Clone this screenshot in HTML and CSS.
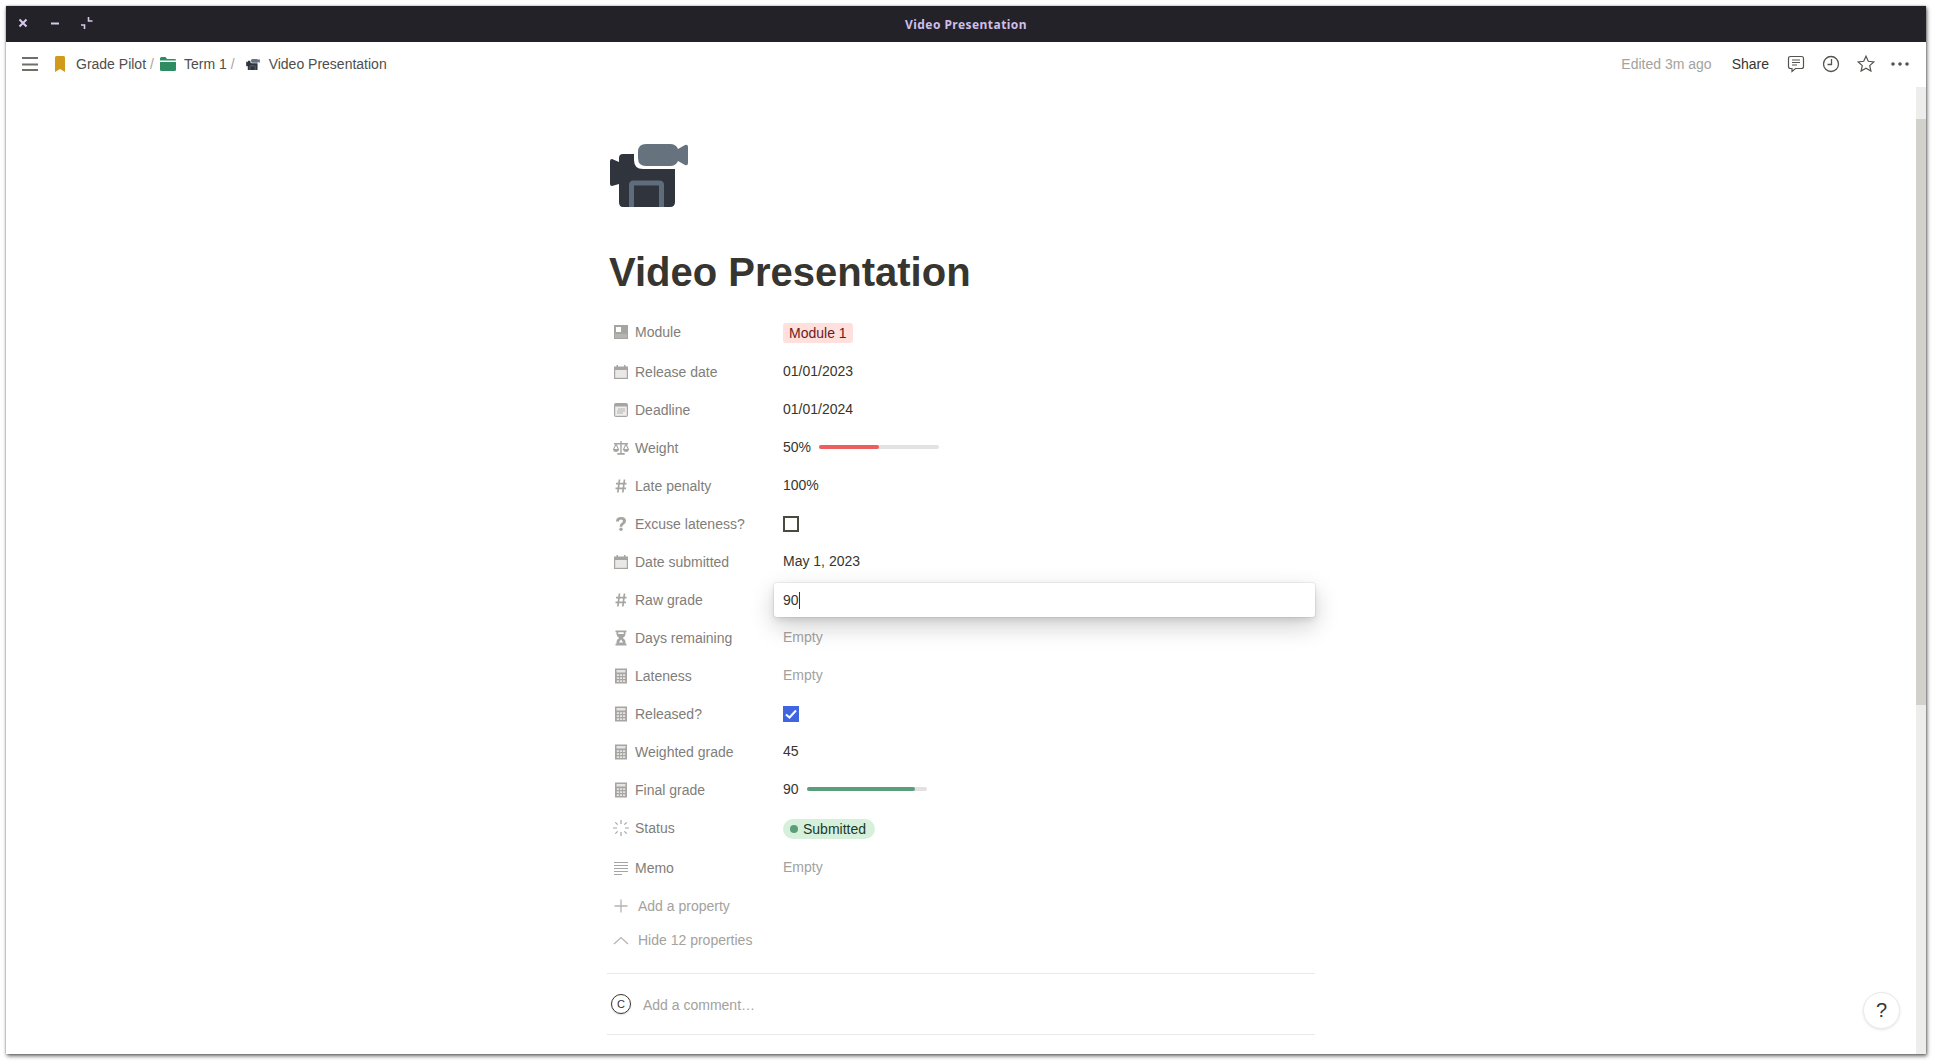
FILE: index.html
```html
<!DOCTYPE html>
<html lang="en">
<head>
    <meta charset="UTF-8">
    <title>Video Presentation</title>
    <link rel="stylesheet" href="styles.css">
</head>
<body>

<div class="window">
    <div class="titlebar">
        <div class="win-buttons">
            <svg class="win-btn" viewBox="0 0 12 12"><path d="M2.500 2.500l7 7M9.500 2.500l-7 7" stroke="#d6c8ee" stroke-width="2"/></svg>
            <svg class="win-btn" viewBox="0 0 12 12"><path d="M2 6.500h8" stroke="#d6c8ee" stroke-width="2"/></svg>
            <svg class="win-btn" viewBox="0 0 12 12"><path d="M7.500 0v4h4M0 8h3.500v4" fill="none" stroke="#d6c8ee" stroke-width="1.600"/></svg>
        </div>
        <div class="win-title">Video Presentation</div>
    </div>

    <div class="topbar">
        <svg class="menu-icon" viewBox="0 0 16 14"><path d="M0 1h16M0 7.500h16M0 13h16" stroke="#6f6e69" stroke-width="1.800"/></svg>
        <div class="crumbs">
            <svg class="crumb-icon" viewBox="0 0 10 16"><path d="M0 1.500q0-1.500 1.500-1.500h7q1.500 0 1.500 1.500v14.500l-5-3-5 3z" fill="#d19a1a"/></svg>
            <span class="crumb">Grade Pilot</span><span class="sep">/</span>
            <svg class="crumb-icon folder" viewBox="0 0 16 14"><path d="M0 1.500q0-1.500 1.500-1.500h4l1.500 2h7.500q1.500 0 1.500 1v.5h-16z" fill="#2e8b62"/><path d="M0 5h16v7.500q0 1.500-1.500 1.500h-13q-1.500 0-1.500-1.500z" fill="#2e8b62"/></svg>
            <span class="crumb">Term 1</span><span class="sep">/</span>
            <svg class="crumb-icon cam" viewBox="0 0 78 63"><use href="#camera"/></svg>
            <span class="crumb">Video Presentation</span>
        </div>
        <div class="top-actions">
            <span class="edited">Edited 3m ago</span>
            <span class="share">Share</span>
            <svg class="action-icon" viewBox="0 0 18 18"><path d="M3.500 1.500h11q2 0 2 2v8q0 2-2 2h-6l-3.500 3v-3h-1.500q-2 0-2-2v-8q0-2 2-2z" fill="none" stroke="#55534e" stroke-width="1.200"/><path d="M5 5h8M5 7.500h8M5 10h5" stroke="#55534e" stroke-width="1.200"/></svg>
            <svg class="action-icon" viewBox="0 0 18 18"><circle cx="9" cy="9" r="7.500" fill="none" stroke="#55534e" stroke-width="1.300"/><path d="M9.500 4v5.500h-4" fill="none" stroke="#55534e" stroke-width="1.300"/></svg>
            <svg class="action-icon" viewBox="0 0 18 18"><path d="M9 1.200l2.300 5.100 5.500.6-4.100 3.700 1.200 5.500-4.900-2.900-4.900 2.900 1.200-5.500-4.100-3.700 5.500-.6z" fill="none" stroke="#55534e" stroke-width="1.200"/></svg>
            <svg class="more-icon" viewBox="0 0 18 4"><circle cx="2" cy="2" r="1.800" fill="#55534e"/><circle cx="9" cy="2" r="1.800" fill="#55534e"/><circle cx="16" cy="2" r="1.800" fill="#55534e"/></svg>
        </div>
    </div>

    <div class="main">
        <div class="page">
            <svg class="page-icon" viewBox="0 0 78 63">
                <g id="camera">
                    <path d="M13 10h11v6q0 9 9 9h32v33q0 5-5 5h-47q-4 0-4-5v-18l-7 2q-2 0-2-2v-23q0-2 2-2l7 3v-4q0-4 4-4z" fill="#2f343d"/>
                    <path d="M21.500 63v-22q0-2 2-2h26q2 0 2 2v22" fill="none" stroke="#5f6c7a" stroke-width="5"/>
                    <path d="M36 0h24q6 0 8 5l7-4q3-1 3 2v16q0 3-3 2l-7-4q-2 5-8 5h-24q-8 0-8-8v-6q0-8 8-8z" fill="#66737f"/>
                </g>
            </svg>
            <h1 class="page-title">Video Presentation</h1>

            <div class="props">
                <div class="prop tall">
                    <div class="prop-label">
                        <svg class="prop-icon" viewBox="-1 -1 16 16"><path d="M0 0h14v14h-14z" fill="#a6a5a1"/><path d="M2 2h5v5h-5z" fill="#fff"/><path d="M1 9h12v4h-12z" fill="#b5b4b0"/></svg>
                        <span>Module</span>
                    </div>
                    <div class="prop-value"><span class="tag-red">Module 1</span></div>
                </div>
                <div class="prop">
                    <div class="prop-label">
                        <svg class="prop-icon" viewBox="-1 -1 16 16"><use href="#i-cal"/></svg>
                        <span>Release date</span>
                    </div>
                    <div class="prop-value">01/01/2023</div>
                </div>
                <div class="prop">
                    <div class="prop-label">
                        <svg class="prop-icon" viewBox="-1 -1 16 16"><path d="M2 0h10q2 0 2 2v10q0 2-2 2h-10q-2 0-2-2v-10q0-2 2-2z" fill="#a6a5a1"/><path d="M1.200 3.500h11.600v9.300h-11.600z" fill="#fff" fill-opacity=".8"/><path d="M4 5.500h7v1h-7zM3 7.500h8v1h-8zM3 9.500h6v1h-6z" fill="#b5b4b0"/></svg>
                        <span>Deadline</span>
                    </div>
                    <div class="prop-value">01/01/2024</div>
                </div>
                <div class="prop">
                    <div class="prop-label">
                        <svg class="prop-icon" viewBox="0 0 16 14"><path d="M7.300 0h1.400v12h3v1.800h-7.400v-1.800h3zM1 2h14v1.400h-14z" fill="#a6a5a1"/><path d="M3 3l-2.500 5.500h5zM13 3l-2.500 5.500h5z" fill="none" stroke="#a6a5a1" stroke-width="1.100"/><path d="M0 8.500h6q-.5 2.600-3 2.600t-3-2.600zM10 8.500h6q-.5 2.600-3 2.600t-3-2.600z" fill="#a6a5a1"/></svg>
                        <span>Weight</span>
                    </div>
                    <div class="prop-value">
                        50%
                        <div class="bar"><div class="bar-fill red" style="width: 50%"></div></div>
                    </div>
                </div>
                <div class="prop">
                    <div class="prop-label">
                        <svg class="prop-icon" viewBox="-1 -1 16 16"><use href="#i-hash"/></svg>
                        <span>Late penalty</span>
                    </div>
                    <div class="prop-value">100%</div>
                </div>
                <div class="prop">
                    <div class="prop-label">
                        <svg class="prop-icon" viewBox="-1 -1 16 16"><path d="M2 4.500q0-4.500 5-4.500 5 0 5 4 0 2.300-2.300 3.500-1.300.7-1.300 2.200h-2.800q0-2.700 1.900-3.800 1.500-.8 1.500-1.800 0-1.500-2-1.500-2.100 0-2.100 1.900z" fill="#a6a5a1"/><circle cx="7" cy="12.300" r="1.700" fill="#a6a5a1"/></svg>
                        <span>Excuse lateness?</span>
                    </div>
                    <div class="prop-value"><span class="checkbox"></span></div>
                </div>
                <div class="prop">
                    <div class="prop-label">
                        <svg class="prop-icon" viewBox="-1 -1 16 16">
                            <g id="i-cal"><path d="M2.500 0h1.500v1.500h6v-1.500h1.500v1.500h2.500v12.500h-14v-12.500h2.500z" fill="#a6a5a1"/><path d="M1.200 5h11.600v7.800h-11.600z" fill="#fff" fill-opacity=".75"/></g>
                        </svg>
                        <span>Date submitted</span>
                    </div>
                    <div class="prop-value">May 1, 2023</div>
                </div>
                <div class="prop">
                    <div class="prop-label">
                        <svg class="prop-icon" viewBox="-1 -1 16 16">
                            <g id="i-hash"><path d="M5.500 .5l-1.700 13M10.500 .5l-1.700 13M2 4.700h10.500M1.500 9.300h10.500" fill="none" stroke="#a6a5a1" stroke-width="1.700"/></g>
                        </svg>
                        <span>Raw grade</span>
                    </div>
                    <div class="prop-editor">90<span class="caret"></span></div>
                </div>
                <div class="prop">
                    <div class="prop-label">
                        <svg class="prop-icon" viewBox="-1 -1 16 16"><path d="M1.500 -.5h11v1.800h-1v2q0 2-2.700 3.700 2.700 1.700 2.700 3.700v2h1v1.800h-11v-1.800h1v-2q0-2 2.700-3.700-2.700-1.700-2.700-3.700v-2h-1z" fill="#a6a5a1"/><path d="M4.300 1.300h5.400v1.800h-5.400zM7 8.500l2.200 3h-4.400z" fill="#fff"/></svg>
                        <span>Days remaining</span>
                    </div>
                    <div class="prop-value empty">Empty</div>
                </div>
                <div class="prop">
                    <div class="prop-label">
                        <svg class="prop-icon" viewBox="-1 -1 16 16">
                            <g id="i-calc"><path d="M1 -.5h12v15h-12z" fill="#a6a5a1"/><path d="M2.500 1h9v2.500h-9zM2.800 5.200h2.200v1.800h-2.200zM5.900 5.200h2.200v1.800h-2.200zM9 5.200h2.200v1.800h-2.200zM2.800 8.200h2.200v1.800h-2.200zM5.900 8.200h2.200v1.800h-2.200zM9 8.200h2.200v1.800h-2.200zM2.800 11.200h2.200v1.800h-2.200zM5.900 11.200h2.200v1.800h-2.200zM9 11.200h2.200v1.800h-2.200z" fill="#fff" fill-opacity=".7"/></g>
                        </svg>
                        <span>Lateness</span>
                    </div>
                    <div class="prop-value empty">Empty</div>
                </div>
                <div class="prop">
                    <div class="prop-label">
                        <svg class="prop-icon" viewBox="-1 -1 16 16"><use href="#i-calc"/></svg>
                        <span>Released?</span>
                    </div>
                    <div class="prop-value">
                        <span class="checkbox checked"><svg viewBox="0 0 16 16"><path d="M3 8.500l3.500 3 6.500-7" fill="none" stroke="#fff" stroke-width="2"/></svg></span>
                    </div>
                </div>
                <div class="prop">
                    <div class="prop-label">
                        <svg class="prop-icon" viewBox="-1 -1 16 16"><use href="#i-calc"/></svg>
                        <span>Weighted grade</span>
                    </div>
                    <div class="prop-value">45</div>
                </div>
                <div class="prop">
                    <div class="prop-label">
                        <svg class="prop-icon" viewBox="-1 -1 16 16"><use href="#i-calc"/></svg>
                        <span>Final grade</span>
                    </div>
                    <div class="prop-value">
                        90
                        <div class="bar"><div class="bar-fill green" style="width: 90%"></div></div>
                    </div>
                </div>
                <div class="prop tall">
                    <div class="prop-label">
                        <svg class="prop-icon" viewBox="0 0 16 16"><path d="M8 0v4M8 12v4M0 8h4M12 8h4M2.300 2.300l2.300 2.300M11.400 11.400l2.300 2.300M13.700 2.300l-2.300 2.300M4.600 11.400l-2.300 2.300" stroke="#a6a5a1" stroke-width="1.200"/></svg>
                        <span>Status</span>
                    </div>
                    <div class="prop-value"><span class="tag-green"><span class="dot"></span>Submitted</span></div>
                </div>
                <div class="prop">
                    <div class="prop-label">
                        <svg class="prop-icon" viewBox="-1 -1 16 16"><path d="M0 1.500h14M0 4.500h14M0 7.500h14M0 10.500h14M0 13.500h8" stroke="#a6a5a1" stroke-width="1"/></svg>
                        <span>Memo</span>
                    </div>
                    <div class="prop-value empty">Empty</div>
                </div>
            </div>

            <div class="prop-link">
                <svg class="prop-icon" viewBox="-1 -1 16 16"><path d="M7 .5v13M.5 7h13" stroke="#b5b4b0" stroke-width="1.300"/></svg>
                <span>Add a property</span>
            </div>
            <div class="prop-link hide">
                <svg class="prop-icon" viewBox="-1 -1 16 16"><path d="M0 11l7-6.500 7 6.500" fill="none" stroke="#b5b4b0" stroke-width="1.200"/></svg>
                <span>Hide 12 properties</span>
            </div>

            <div class="comment-row">
                <span class="avatar">C</span>
                <span class="comment-text">Add a comment…</span>
            </div>
        </div>
        <div class="scrollbar"><div class="scroll-thumb"></div></div>
        <button class="help-btn">?</button>
    </div>
</div>

</body>
</html>
```

FILE: styles.css
```css
* {
    box-sizing: border-box;
}
body {
    margin: 0;
    padding: 6px 10px 10px 6px;
    height: 1064px;
    overflow: hidden;
    background-color: #fff;
    font-family: "Liberation Sans", Arial, sans-serif;
    font-size: 14px;
    color: #37352f;
}
.window {
    height: 100%;
    display: flex;
    flex-direction: column;
    background-color: #fff;
    box-shadow: 1px 2px 4px rgba(0, 0, 0, 0.6), 0 0 2px rgba(0, 0, 0, 0.3);
}
.titlebar {
    height: 36px;
    flex: none;
    background-color: #242229;
    position: relative;
    display: flex;
    align-items: center;
    justify-content: center;
}
.win-buttons {
    position: absolute;
    left: 11px;
    top: 11px;
    display: flex;
    gap: 20px;
}
.win-btn {
    width: 12px;
    height: 12px;
}
.win-title {
    font-family: "Noto Sans", sans-serif;
    font-size: 12px;
    font-weight: 700;
    color: #cdbfe6;
    letter-spacing: 0.45px;
}
.topbar {
    height: 45px;
    flex: none;
    display: flex;
    align-items: center;
    padding: 0 17px 2px 16px;
}
.menu-icon {
    width: 16px;
    height: 14px;
    margin-right: 17px;
}
.crumbs {
    display: flex;
    align-items: center;
    margin-top: 1px;
}
.crumb-icon {
    width: 10px;
    height: 16px;
    margin-right: 11px;
}
.crumb-icon.folder {
    width: 16px;
    height: 14px;
    margin-left: 6px;
    margin-right: 8px;
}
.crumb-icon.cam {
    width: 14px;
    height: 11px;
    margin-left: 11px;
    margin-right: 9px;
}
.crumb {
    color: #4f4e4a;
}
.sep {
    color: #a6a5a1;
    margin-left: 4px;
}
.top-actions {
    margin-left: auto;
    display: flex;
    align-items: center;
}
.edited {
    color: #a3a29e;
}
.share {
    margin-left: 20px;
    color: #37352f;
}
.action-icon {
    width: 18px;
    height: 18px;
    margin-left: 17px;
}
.share + .action-icon {
    margin-left: 18px;
}
.more-icon {
    width: 18px;
    height: 4px;
    margin-left: 16px;
}
.main {
    flex: 1;
    min-height: 0;
    display: flex;
    position: relative;
}
.page {
    flex: 1;
    overflow: hidden;
    padding: 57px 601px 0;
}
.page-icon {
    display: block;
    width: 78px;
    height: 63px;
    margin-left: 3px;
}
.page-title {
    margin: 41px 0 0 2px;
    font-size: 40px;
    line-height: 48px;
    font-weight: 700;
    color: #37352f;
}
.props {
    margin-top: 17px;
}
.prop {
    height: 38px;
    display: flex;
    align-items: flex-start;
    position: relative;
}
.prop.tall {
    height: 40px;
}
.prop-label {
    width: 176px;
    height: 38px;
    flex: none;
    padding-left: 6px;
    display: flex;
    align-items: center;
    color: #7f7e7a;
}
.prop-icon {
    width: 16px;
    height: 16px;
    margin-right: 6px;
    flex: none;
}
.prop-value {
    height: 38px;
    display: flex;
    align-items: center;
    margin-top: -1px;
    color: #37352f;
}
.prop-value.empty {
    color: #a3a29e;
}
.tag-red {
    margin-top: 4px;
    padding: 0 6px;
    height: 20px;
    line-height: 20px;
    border-radius: 3px;
    background-color: #ffe0dd;
    color: #6e1a1a;
}
.tag-green {
    margin-top: 4px;
    display: flex;
    align-items: center;
    padding: 0 9px 0 7px;
    height: 20px;
    border-radius: 10px;
    background-color: #d6f0dc;
    color: #1c3829;
}
.dot {
    width: 8px;
    height: 8px;
    border-radius: 50%;
    background-color: #5a9e7c;
    margin-right: 5px;
}
.bar {
    width: 120px;
    height: 4px;
    margin-left: 8px;
    border-radius: 2px;
    background-color: #e3e2e0;
}
.bar-fill {
    height: 100%;
    border-radius: 2px;
}
.bar-fill.red {
    background-color: #ee5e5e;
}
.bar-fill.green {
    background-color: #5a9e7c;
}
.checkbox {
    width: 16px;
    height: 16px;
    margin-top: 2px;
    display: block;
    border: 2px solid #4a4942;
}
.checkbox.checked {
    border: none;
    background-color: #3f66e0;
}
.checkbox svg {
    display: block;
}
.prop-editor {
    position: absolute;
    left: 167px;
    top: 2px;
    width: 541px;
    height: 34px;
    padding: 0 9px;
    display: flex;
    align-items: center;
    background-color: #fff;
    border-radius: 3px;
    box-shadow: 0 0 0 1px rgba(15, 15, 15, 0.05), 0 3px 6px rgba(15, 15, 15, 0.1), 0 9px 24px rgba(15, 15, 15, 0.2);
    z-index: 2;
}
.caret {
    width: 1px;
    height: 17px;
    background-color: #37352f;
}
.prop-link {
    height: 38px;
    display: flex;
    align-items: center;
    padding-left: 6px;
    color: #a3a29e;
}
.prop-link .prop-icon {
    margin-right: 9px;
}
.prop-link.hide {
    height: 30px;
}
.comment-row {
    margin-top: 18px;
    height: 62px;
    display: flex;
    align-items: center;
    padding-left: 4px;
    border-top: 1px solid #e9e9e7;
    border-bottom: 1px solid #e9e9e7;
}
.avatar {
    width: 20px;
    height: 20px;
    border-radius: 50%;
    border: 1px solid #37352f;
    font-size: 11px;
    display: flex;
    align-items: center;
    justify-content: center;
    box-shadow: 0 1px 2px rgba(0, 0, 0, 0.15);
}
.comment-text {
    margin-left: 12px;
    margin-top: 2px;
    color: #a3a29e;
}
.scrollbar {
    width: 10px;
    flex: none;
    background-color: #ededeb;
}
.scroll-thumb {
    margin-top: 32px;
    height: 586px;
    background-color: #d3d1cb;
}
.help-btn {
    position: absolute;
    right: 26px;
    bottom: 25px;
    width: 37px;
    height: 37px;
    border: 1px solid #e9e9e7;
    border-radius: 50%;
    background-color: #fff;
    font-family: "Liberation Sans", Arial, sans-serif;
    font-size: 20px;
    color: #37352f;
    box-shadow: 0 1px 3px rgba(0, 0, 0, 0.1);
}
```
